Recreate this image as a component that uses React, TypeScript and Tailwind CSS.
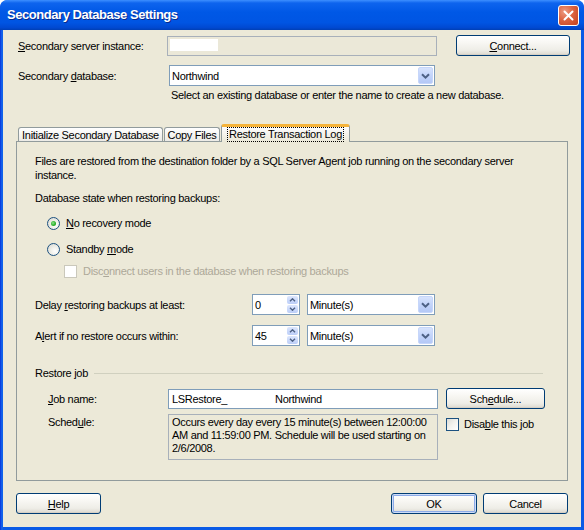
import React from "react";

function U({ c }: { c: string }) {
  return <span className="underline decoration-1 underline-offset-[1px]">{c}</span>;
}

function Btn({
  children,
  className = "",
  primary = false,
}: {
  children: React.ReactNode;
  className?: string;
  primary?: boolean;
}) {
  return (
    <div
      className={`flex shrink-0 items-center justify-center rounded-[3px] border border-[#003C74] bg-[linear-gradient(to_bottom,#FFFFFF_0%,#F8F7F3_35%,#EEEDE7_75%,#DCD8CE_100%)] ${
        primary ? "shadow-[inset_0_0_0_1px_#CDDCF7,inset_0_0_0_2px_#8DABE8]" : "shadow-[inset_0_-1px_0_#D6D0C5]"
      } ${className}`}
    >
      {children}
    </div>
  );
}

function Chevron({ up = false, small = false }: { up?: boolean; small?: boolean }) {
  if (small) {
    return (
      <svg width="7" height="4" viewBox="0 0 7 4">
        <path
          d={up ? "M1 3.2 L3.5 0.8 L6 3.2" : "M1 0.8 L3.5 3.2 L6 0.8"}
          fill="none"
          stroke="#4D6185"
          strokeWidth="1.4"
        />
      </svg>
    );
  }
  return (
    <svg width="9" height="6" viewBox="0 0 9 6">
      <path d="M1 1.2 L4.5 4.6 L8 1.2" fill="none" stroke="#4D6185" strokeWidth="2" />
    </svg>
  );
}

function Combo({ value, className = "" }: { value: string; className?: string }) {
  return (
    <div className={`flex shrink-0 items-center border border-[#7F9DB9] bg-white ${className}`}>
      <span className="flex-1 pl-[2px]">{value}</span>
      <div className="mr-[1px] flex h-[calc(100%-2px)] w-[15px] items-center justify-center rounded-[2px] border border-[#C6D6FA] bg-[linear-gradient(to_bottom,#D7E3FD_0%,#C3D4FA_50%,#B4C8F6_100%)]">
        <Chevron />
      </div>
    </div>
  );
}

function Spin({ value }: { value: string }) {
  return (
    <div className="flex h-[21px] w-[48px] shrink-0 items-center border border-[#7F9DB9] bg-white">
      <span className="flex-1 pl-[2px]">{value}</span>
      <div className="mr-[1px] flex h-full flex-col justify-center gap-[1px] py-[1px]">
        <div className="flex h-[8px] w-[11px] items-center justify-center rounded-[2px] bg-[linear-gradient(to_bottom,#DCE6FD,#BCCEF8)]">
          <Chevron up small />
        </div>
        <div className="flex h-[8px] w-[11px] items-center justify-center rounded-[2px] bg-[linear-gradient(to_bottom,#DCE6FD,#BCCEF8)]">
          <Chevron small />
        </div>
      </div>
    </div>
  );
}

function Radio({ checked = false }: { checked?: boolean }) {
  return (
    <div className="flex h-[13px] w-[13px] shrink-0 items-center justify-center rounded-full border border-[#1C5180] bg-[radial-gradient(circle_at_65%_65%,#FFFFFF_0%,#F0F0EA_40%,#D6D5CD_100%)]">
      {checked && (
        <div className="h-[5px] w-[5px] rounded-full bg-[radial-gradient(circle_at_40%_40%,#8BE38B_0%,#2BB12B_55%,#1A8F1A_100%)]" />
      )}
    </div>
  );
}

function Check({ disabled = false }: { disabled?: boolean }) {
  return disabled ? (
    <div className="h-[13px] w-[13px] shrink-0 border border-[#CAC8BB] bg-white" />
  ) : (
    <div className="h-[13px] w-[13px] shrink-0 border border-[#1C5180] bg-[linear-gradient(135deg,#DCDCD7_0%,#F2F2EE_50%,#FFFFFF_100%)]" />
  );
}

function TitleBar() {
  return (
    <div className="flex h-[30px] shrink-0 items-center rounded-t-[7px] bg-[linear-gradient(to_bottom,#3D8FFF_0%,#0E64EE_10%,#0058E6_40%,#0055E3_75%,#0049D2_92%,#003FB5_100%)] pl-[7px] pr-[5px]">
      <span className="flex-1 text-[13px] font-bold tracking-[-0.45px] text-white [text-shadow:1px_1px_0_#0A2A8A]">
        Secondary Database Settings
      </span>
      <div className="flex h-[21px] w-[21px] items-center justify-center rounded-[3px] border border-white bg-[radial-gradient(circle_at_30%_30%,#ED9B82_0%,#DD6440_45%,#C4401D_100%)]">
        <svg width="11" height="11" viewBox="0 0 11 11">
          <path d="M1.5 1.5 L9.5 9.5 M9.5 1.5 L1.5 9.5" stroke="white" strokeWidth="2" strokeLinecap="round" />
        </svg>
      </div>
    </div>
  );
}

function Tabs() {
  return (
    <div className="flex h-[17px] shrink-0 items-end pl-[2px]">
      <div className="flex h-[14px] w-[145px] items-center justify-center rounded-t-[3px] border-x border-t border-[#919B9C] bg-[linear-gradient(to_bottom,#FFFFFF,#ECEBE6)]">
        Initialize Secondary Database
      </div>
      <div className="ml-[1px] flex h-[14px] w-[56px] items-center justify-center rounded-t-[3px] border-x border-t border-[#919B9C] bg-[linear-gradient(to_bottom,#FFFFFF,#ECEBE6)]">
        Copy Files
      </div>
      <div className="relative z-10 -mb-[1px] ml-[1px] flex h-[18px] w-[129px] items-center justify-center rounded-t-[3px] border-x border-t-[3px] border-x-[#919B9C] border-t-[#F5B33A] bg-[linear-gradient(to_bottom,#FCFCFE,#ECE9D8)]">
        <span className="border border-dotted border-black px-[1px] leading-[13px]">Restore Transaction Log</span>
      </div>
    </div>
  );
}

export default function App() {
  return (
    <div className="h-[530px] w-[584px] bg-white font-['Liberation_Sans',Arial,sans-serif] text-[11px] leading-[14px] tracking-[-0.3px] text-black">
      <div className="flex h-full w-full flex-col rounded-t-[8px] bg-[linear-gradient(to_right,#0831D9,#166AEE_2px,#0A5BE6_3px)]">
        <TitleBar />
        <div className="mx-[3px] mb-[3px] flex flex-1 flex-col bg-[#ECE9D8] px-[13px]">
          {/* server instance */}
          <div className="mt-[5px] flex h-[21px] items-center pl-[2px]">
            <span className="w-[149px] shrink-0">
              <U c="S" />
              econdary server instance:
            </span>
            <div className="flex h-[20px] w-[270px] shrink-0 items-start border border-[#A8B0BA] bg-[#EBE8D8] pl-[2px] pt-[2px]">
              <div className="h-[12px] w-[48px] bg-white" />
            </div>
            <Btn className="ml-[19px] h-[21px] w-[114px]">
              <span>
                <U c="C" />
                onnect...
              </span>
            </Btn>
          </div>

          {/* secondary database */}
          <div className="mt-[9px] flex h-[21px] items-center pl-[2px]">
            <span className="w-[151px] shrink-0">
              Secondary <U c="d" />
              atabase:
            </span>
            <Combo value="Northwind" className="h-[21px] w-[266px]" />
          </div>
          <div className="ml-[155px] mt-[2px]">
            Select an existing database or enter the name to create a new database.
          </div>

          <div className="mt-[22px]">
            <Tabs />
          </div>

          {/* tab page */}
          <div className="flex h-[340px] shrink-0 flex-col border border-[#919B9C] bg-[#ECE9D8] pl-[18px]">
            <div className="mt-[12px]">
              Files are restored from the destination folder by a SQL Server Agent job running on the secondary server
              <br />
              instance.
            </div>
            <div className="mt-[9px]">Database state when restoring backups:</div>
            <div className="ml-[12px] mt-[11px] flex h-[14px] items-center gap-[6px]">
              <Radio checked />
              <span>
                <U c="N" />o recovery mode
              </span>
            </div>
            <div className="ml-[12px] mt-[12px] flex h-[14px] items-center gap-[6px]">
              <Radio />
              <span>
                Standby <U c="m" />
                ode
              </span>
            </div>
            <div className="ml-[29px] mt-[8px] flex h-[14px] items-center gap-[6px] text-[#ACA899]">
              <Check disabled />
              <span>
                Disc
                <U c="o" />
                nnect users in the database when restoring backups
              </span>
            </div>

            <div className="mt-[16px] flex h-[21px] items-center">
              <span className="w-[217px] shrink-0">
                Delay <U c="r" />
                estoring backups at least:
              </span>
              <Spin value="0" />
              <Combo value="Minute(s)" className="ml-[7px] h-[21px] w-[128px]" />
            </div>
            <div className="mt-[10px] flex h-[21px] items-center">
              <span className="w-[217px] shrink-0">
                A<U c="l" />
                ert if no restore occurs within:
              </span>
              <Spin value="45" />
              <Combo value="Minute(s)" className="ml-[7px] h-[21px] w-[128px]" />
            </div>

            <div className="mr-[24px] mt-[20px] flex h-[14px] items-center">
              <span>Restore job</span>
              <div className="ml-[6px] h-px flex-1 bg-[#D0D0BF]" />
            </div>

            <div className="ml-[13px] mt-[8px] flex h-[21px] items-center">
              <span className="w-[120px] shrink-0">
                <U c="J" />
                ob name:
              </span>
              <div className="flex h-[20px] w-[270px] shrink-0 items-center border border-[#7F9DB9] bg-white pl-[3px]">
                <span className="inline-block w-[103px]">LSRestore_</span>
                <span>Northwind</span>
              </div>
              <Btn className="ml-[8px] h-[21px] w-[99px]">
                <span>
                  Sch
                  <U c="e" />
                  dule...
                </span>
              </Btn>
            </div>

            <div className="ml-[13px] mt-[5px] flex items-start">
              <span className="w-[120px] shrink-0 pt-[1px]">
                Sched
                <U c="u" />
                le:
              </span>
              <div className="h-[46px] w-[270px] shrink-0 whitespace-nowrap border border-[#A8B0BA] bg-[#ECE9D8] pl-[3px] pt-[1px] leading-[13px]">
                Occurs every day every 15 minute(s) between 12:00:00
                <br />
                AM and 11:59:00 PM. Schedule will be used starting on
                <br />
                2/6/2008.
              </div>
              <div className="ml-[8px] mt-[3px] flex h-[14px] items-center gap-[5px]">
                <Check />
                <span>
                  Disa
                  <U c="b" />
                  le this job
                </span>
              </div>
            </div>
          </div>

          {/* bottom buttons */}
          <div className="mt-[12px] flex h-[21px] items-center">
            <Btn className="h-[21px] w-[85px]">
              <span>
                <U c="H" />
                elp
              </span>
            </Btn>
            <div className="flex-1" />
            <Btn primary className="h-[21px] w-[86px]">
              OK
            </Btn>
            <Btn className="ml-[6px] h-[21px] w-[85px]">Cancel</Btn>
          </div>
        </div>
      </div>
    </div>
  );
}
